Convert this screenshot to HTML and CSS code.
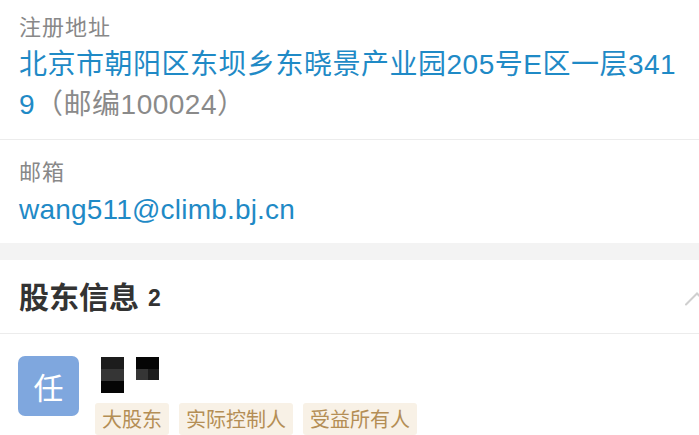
FILE: index.html
```html
<!DOCTYPE html>
<html lang="zh-CN">
<head>
  <meta charset="UTF-8" />
  <meta name="viewport" content="width=device-width, initial-scale=1.0"/>
  <title>企业信息</title>
  <link rel="stylesheet" href="styles.css">
</head>
<body>
  <div class="info">
    <div class="field first">
      <div class="label">注册地址</div>
      <div class="value">北京市朝阳区东坝乡东晓景产业园205号E区一层3419<span class="muted">（邮编100024）</span></div>
    </div>
    <div class="field">
      <div class="label">邮箱</div>
      <div class="value email">wang511@climb.bj.cn</div>
    </div>
  </div>

  <div class="band"></div>

  <div class="card">
    <div class="card-head">
      <h2>股东信息<span class="count">2</span></h2>
      <svg class="chevron" width="24" height="14" viewBox="0 0 24 14">
        <polyline points="1,12.5 12,1.5 23,12.5" fill="none" stroke="#cfcfcf" stroke-width="2" stroke-linecap="round"/>
      </svg>
    </div>

    <div class="holder">
      <div class="avatar">任</div>
      <div class="holder-body">
        <div class="mosaic">
          <div class="mosaic-block">
            <span class="px c1"></span>
            <span class="px c2"></span>
            <span class="px c3"></span>
          </div>
          <div class="mosaic-block grid">
            <span class="px c3"></span>
            <span class="px c3"></span>
            <span class="px c2"></span>
            <span class="px c1"></span>
          </div>
        </div>
        <div class="tags">
          <span class="tag">大股东</span>
          <span class="tag">实际控制人</span>
          <span class="tag">受益所有人</span>
        </div>
      </div>
    </div>
  </div>
</body>
</html>
```

FILE: styles.css
```css
body {
  margin: 0;
  width: 699px;
  height: 435px;
  overflow: hidden;
  background: #ffffff;
  font-family: 'Liberation Sans', 'Noto Sans CJK SC', sans-serif;
}

.field {
  padding: 18px 19px 13px;
  border-bottom: 1px solid #ececec;
}

.field.first {
  padding-top: 13px;
  padding-bottom: 14px;
}

.field:last-child {
  border-bottom: none;
}

.label {
  font-size: 22px;
  line-height: 30px;
  letter-spacing: 1px;
  color: #888888;
}

.value {
  margin-top: 2px;
  width: 662px;
  font-size: 28px;
  line-height: 40px;
  letter-spacing: 0.5px;
  color: #1f8ac6;
  word-break: break-all;
}

.value.email {
  letter-spacing: 0.2px;
}

.muted {
  color: #8a8a8a;
}

.band {
  height: 17px;
  background: #f3f3f3;
}

.card-head {
  display: flex;
  align-items: center;
  justify-content: space-between;
  height: 73px;
  padding-left: 19px;
  border-bottom: 1px solid #ececec;
}

.card-head h2 {
  margin: 0;
  font-family: 'Noto Sans CJK SC', sans-serif;
  font-size: 30px;
  font-weight: 700;
  color: #333333;
  line-height: 40px;
}

.count {
  margin-left: 9px;
  font-family: 'Liberation Sans', sans-serif;
  font-size: 23px;
  vertical-align: 2px;
}

.chevron {
  margin-right: -10px;
  margin-top: 5px;
}

.holder {
  display: flex;
  padding: 22px 0 0 18px;
}

.avatar {
  width: 61px;
  height: 60px;
  border-radius: 7px;
  background: #7fa7de;
  color: #ffffff;
  font-family: 'Noto Sans CJK SC', sans-serif;
  font-size: 30px;
  display: flex;
  align-items: center;
  justify-content: center;
  flex-shrink: 0;
}

.holder-body {
  margin-left: 16px;
}

.mosaic {
  display: flex;
  gap: 12px;
  padding-left: 6px;
  height: 36px;
  margin-top: 1px;
}

.mosaic-block {
  display: flex;
  flex-direction: column;
  width: 23px;
}

.mosaic-block .px {
  height: 12px;
}

.mosaic-block.grid {
  flex-direction: row;
  flex-wrap: wrap;
  height: 23px;
}

.mosaic-block.grid .px {
  width: 50%;
  height: 11.5px;
}

.c1 { background: #1c1c1c; }
.c2 { background: #353535; }
.c3 { background: #050505; }

.tags {
  display: flex;
  gap: 10px;
  margin-top: 10px;
}

.tag {
  padding: 0 7px;
  height: 32px;
  line-height: 32px;
  border-radius: 3px;
  background: #f8f1e6;
  color: #b48e55;
  font-family: 'Noto Sans CJK SC', sans-serif;
  font-size: 20px;
}
```
